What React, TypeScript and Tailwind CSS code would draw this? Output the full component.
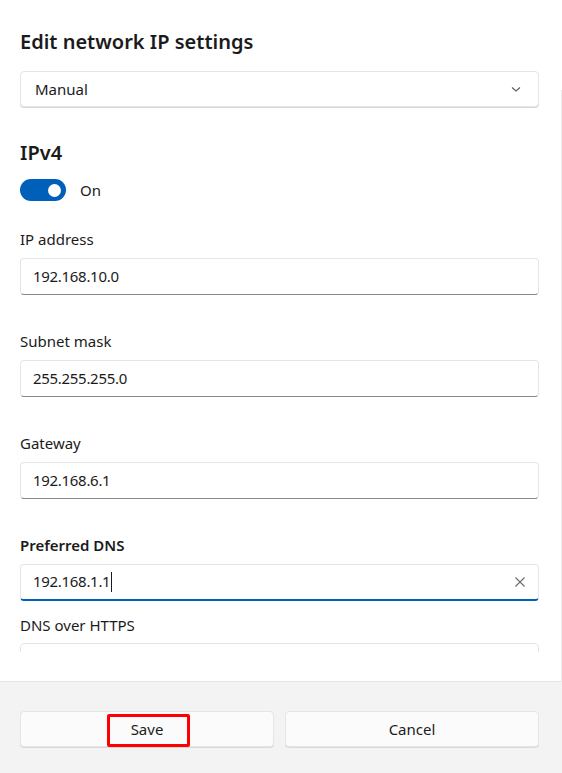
import React from "react";

const font = { fontFamily: '"Segoe UI", "Noto Sans", "Open Sans", sans-serif' };

function Field({ label, value, bold }: { label: string; value: string; bold?: boolean }) {
  return (
    <div className="flex flex-col">
      <div className={`text-[15px] leading-[20px] text-[#1b1b1b] mb-[9px] ${bold ? "font-semibold" : ""}`}>{label}</div>
      <div className="h-[37px] rounded-[4px] border border-[#e5e5e5] border-b-[#8a8a8a] bg-white flex items-center px-[12px] text-[15px] tracking-[-0.3px] text-[#1b1b1b]">
        {value}
      </div>
    </div>
  );
}

export default function App() {
  return (
    <div className="w-[562px] h-[773px] bg-white flex flex-col overflow-hidden" style={font}>
      <div className="flex-1 relative overflow-hidden">
        <div className="absolute right-0 top-[90px] bottom-0 w-px bg-[#ececec]" />
        <div className="px-[20px] pt-[28px]">
          <h1 className="text-[20px] leading-[28px] font-semibold text-[#1b1b1b]">Edit network IP settings</h1>
          <div className="mt-[15px] h-[36px] w-[519px] rounded-[4px] border border-[#e5e5e5] shadow-[0_1px_0_#d6d6d6] bg-white flex items-center justify-between pl-[14px] pr-[16px] text-[15px] text-[#1b1b1b]">
            <span>Manual</span>
            <svg width="12" height="12" viewBox="0 0 12 12" fill="none" stroke="#5c5c5c" strokeWidth="1.1">
              <path d="M2 4.5 L6 8 L10 4.5" />
            </svg>
          </div>
          <div className="mt-[32px] text-[20px] leading-[28px] font-semibold text-[#1b1b1b]">IPv4</div>
          <div className="mt-[12px] flex items-center gap-[14px]">
            <div className="w-[46px] h-[22px] rounded-full bg-[#005fb8] flex items-center justify-end pr-[5px]">
              <div className="w-[13px] h-[13px] rounded-full bg-white" />
            </div>
            <span className="text-[15px] text-[#1b1b1b]">On</span>
          </div>
          <div className="mt-[27px] w-[519px] flex flex-col">
            <Field label="IP address" value="192.168.10.0" />
            <div className="h-[36px]" />
            <Field label="Subnet mask" value="255.255.255.0" />
            <div className="h-[36px]" />
            <Field label="Gateway" value="192.168.6.1" />
            <div className="h-[36px]" />
            <div className="flex flex-col">
              <div className="text-[15px] leading-[20px] font-semibold text-[#1b1b1b] mb-[9px]">Preferred DNS</div>
              <div className="h-[37px] rounded-[4px] border border-[#e5e5e5] border-b-2 border-b-[#005fb8] bg-white flex items-center justify-between px-[12px] text-[15px] tracking-[-0.3px] text-[#1b1b1b]">
                <span className="flex items-center">
                  192.168.1.1<span className="inline-block w-px h-[20px] bg-[#1b1b1b] ml-px" />
                </span>
                <svg width="12" height="12" viewBox="0 0 12 12" fill="none" stroke="#6b6b6b" strokeWidth="1.1">
                  <path d="M1.5 1.5 L10.5 10.5 M10.5 1.5 L1.5 10.5" />
                </svg>
              </div>
            </div>
            <div className="h-[14px]" />
            <div className="flex flex-col">
              <div className="text-[15px] leading-[20px] text-[#1b1b1b] mb-[8px]">DNS over HTTPS</div>
              <div className="h-[9px] overflow-hidden">
                <div className="h-[37px] rounded-[4px] border border-[#e5e5e5] bg-white" />
              </div>
            </div>
          </div>
        </div>
      </div>
      <div className="h-[92px] shrink-0 bg-[#f3f3f3] border-t border-[#e5e5e5] flex gap-[11px] pl-[20px] pr-[23px] pt-[29px]">
        <div className="flex-1 h-[36px] rounded-[4px] bg-[#fbfbfb] border border-[#e5e5e5] shadow-[0_1px_0_#d9d9d9] flex items-center justify-center relative text-[15px] text-[#1b1b1b]">
          <div className="absolute left-[86px] top-[2px] w-[83px] h-[33px] border-[3px] border-[#ff0000] rounded-[2px]" />
          <span className="relative">Save</span>
        </div>
        <div className="flex-1 h-[36px] rounded-[4px] bg-[#fbfbfb] border border-[#e5e5e5] shadow-[0_1px_0_#d9d9d9] flex items-center justify-center text-[15px] text-[#1b1b1b]">
          Cancel
        </div>
      </div>
    </div>
  );
}
